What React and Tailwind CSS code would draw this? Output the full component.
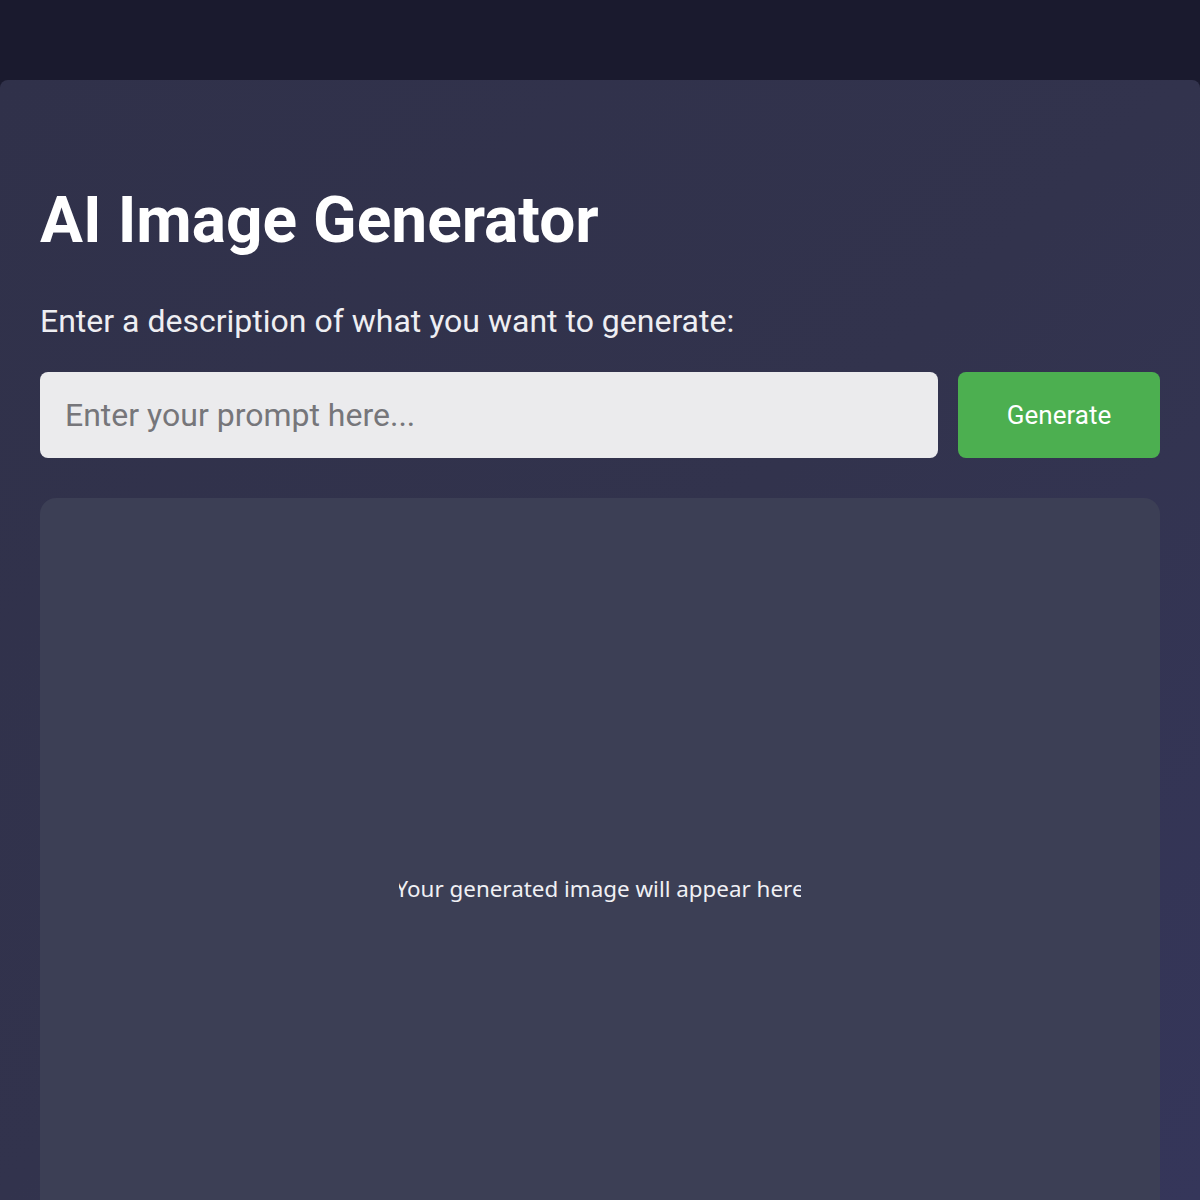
export default function App() {
  return (
    <div
      className="min-h-screen bg-[#1a1a2e] pt-[80px] overflow-hidden"
      style={{ fontFamily: "Roboto, 'Noto Sans', sans-serif" }}
    >
      <div className="rounded-t-lg bg-gradient-to-br from-[#30314a] via-[#32334d] to-[#35365a] px-[40px] pt-[101px] h-[1120px]">
        <h1 className="text-[64px] leading-[80px] font-bold text-white">AI Image Generator</h1>
        <p className="mt-[40px] text-[32px] leading-[40px] text-[#eeeef2]">
          Enter a description of what you want to generate:
        </p>
        <div className="mt-[31px] flex gap-[20px]">
          <input
            type="text"
            placeholder="Enter your prompt here..."
            className="flex-1 h-[86px] rounded-lg bg-[#ebebed] px-[25px] text-[32px] text-[#333] placeholder:text-[#76767a] outline-none"
          />
          <button className="w-[202px] h-[86px] rounded-lg bg-[#4caf50] text-[26px] text-white">
            Generate
          </button>
        </div>
        <div className="mt-[40px] h-[782px] rounded-2xl bg-[#3c3f55] flex items-center justify-center">
          <div className="w-[402px] overflow-hidden flex justify-center whitespace-nowrap">
            <span
              className="text-[22.4px] text-[#f0f0f4]"
              style={{ fontFamily: "'Noto Sans', 'Open Sans', sans-serif" }}
            >
              Your generated image will appear here
            </span>
          </div>
        </div>
      </div>
    </div>
  );
}
